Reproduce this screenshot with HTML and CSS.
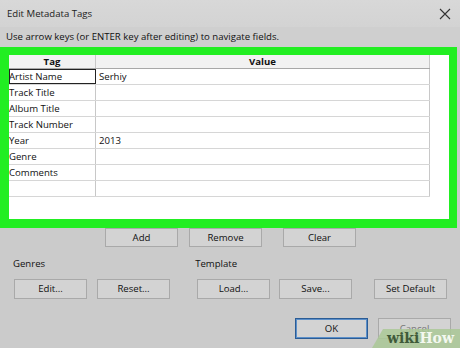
FILE: index.html
```
<!DOCTYPE html>
<html>
<head>
<meta charset="utf-8">
<link rel="stylesheet" href="styles.css">
</head>
<body>
<div class="window">
  <div class="titlebar">
    <span class="title">Edit Metadata Tags</span>
    <svg class="close" width="12" height="12" viewBox="0 0 12 12"><path d="M1 1 L11 11 M11 1 L1 11" stroke="#333" stroke-width="1.1" fill="none"/></svg>
  </div>
  <div class="hint">Use arrow keys (or ENTER key after editing) to navigate fields.</div>
  <div class="frame">
    <div class="grid">
      <div class="row head"><div class="c1">Tag</div><div class="c2">Value</div></div>
      <div class="row"><div class="c1 sel">Artist Name</div><div class="c2">Serhiy</div></div>
      <div class="row"><div class="c1">Track Title</div><div class="c2"></div></div>
      <div class="row"><div class="c1">Album Title</div><div class="c2"></div></div>
      <div class="row"><div class="c1">Track Number</div><div class="c2"></div></div>
      <div class="row"><div class="c1">Year</div><div class="c2">2013</div></div>
      <div class="row"><div class="c1">Genre</div><div class="c2"></div></div>
      <div class="row"><div class="c1">Comments</div><div class="c2"></div></div>
      <div class="row"><div class="c1"></div><div class="c2"></div></div>
    </div>
  </div>
  <div class="btnrow r1">
    <div class="btn add">Add</div>
    <div class="btn remove">Remove</div>
    <div class="btn clear">Clear</div>
  </div>
  <div class="labels">
    <span class="lbl genres">Genres</span>
    <span class="lbl template">Template</span>
  </div>
  <div class="btnrow r2">
    <div class="btn edit">Edit...</div>
    <div class="btn reset">Reset...</div>
    <div class="btn load">Load...</div>
    <div class="btn save">Save...</div>
    <div class="btn setdef">Set Default</div>
  </div>
  <div class="btnrow r3">
    <div class="btn ok">OK</div>
    <div class="btn cancel">Cancel</div>
  </div>
  <div class="wm"><span class="wiki">wiki</span><span class="how">How</span></div>
</div>
</body>
</html>
```
FILE: styles.css
```
* { box-sizing: border-box; }
html, body { margin: 0; padding: 0; }
body { width: 460px; height: 348px; overflow: hidden; font-family: "Open Sans", "Noto Sans", sans-serif; font-size: 9.6px; color: #111; }
.window { position: relative; width: 460px; height: 348px; background: #cbcbcb; overflow: hidden; }
.titlebar { height: 27px; background: linear-gradient(#d8d8d8, #d3d3d3); display: flex; align-items: center; justify-content: space-between; padding: 0 9px 0 7px; }
.title { font-size: 9.6px; color: #222; }
.close { display: block; }
.hint { height: 20px; line-height: 20px; padding-left: 6px; background: #cfcfcf; font-size: 9.6px; color: #111; }
.frame { width: 457px; height: 181px; border: 8px solid #22ee22; border-left-width: 9px; border-bottom-width: 9px; background: #fff; }
.grid { width: 421px; }
.row { display: flex; height: 16px; border-bottom: 1px solid #d6d6d6; }
.row.head { height: 14px; background: #f2f2f2; border-bottom: 1px solid #a8a8a8; font-weight: bold; }
.c1 { width: 87px; border-right: 1px solid #c8c8c8; line-height: 16px; white-space: nowrap; overflow: hidden; }
.c2 { flex: 1; border-right: 1px solid #c8c8c8; padding-left: 3px; line-height: 16px; }
.head .c1, .head .c2 { text-align: center; line-height: 14px; padding-left: 0; }
.c1.sel { outline: 1px solid #222; outline-offset: -1px; }
.btnrow { display: flex; height: 20px; }
.btn { width: 73px; height: 20px; background: #d3d3d3; border: 1px solid #a9a9a9; text-align: center; line-height: 18px; font-size: 9.6px; color: #111; }
.r1 { height: 19px; padding-left: 105px; }
.r1 .btn { height: 19px; line-height: 17px; }
.remove { margin-left: 11px; }
.clear { margin-left: 21px; }
.labels { display: flex; height: 32px; align-items: center; padding-left: 13px; font-size: 9.6px; }
.template { margin-left: 150px; }
.r2 { padding-left: 14px; height: 20px; }
.reset { margin-left: 10px; }
.load { margin-left: 27px; }
.save { margin-left: 9px; }
.setdef { margin-left: 22px; }
.r3 { margin-top: 19px; padding-left: 295px; height: 21px; }
.r3 .btn { height: 21px; line-height: 19px; }
.ok { border: 1px solid #2b5c95; box-shadow: inset 0 0 0 1px #5b8fc9; }
.cancel { margin-left: 10px; color: #777; }
.wm { position: absolute; left: 372px; top: 329px; width: 100px; height: 19px; background: rgba(170, 200, 150, 0.85); clip-path: polygon(11px 0, 100% 0, 100% 100%, 0 100%); padding-left: 15px; font-family: "DejaVu Serif", "Liberation Serif", serif; font-weight: bold; font-size: 14px; line-height: 19px; }
.wiki { color: #3f5a3a; }
.how { color: #f4f8f0; }
```
